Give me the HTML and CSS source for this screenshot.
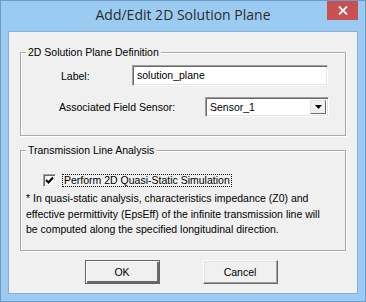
FILE: index.html
```html
<!DOCTYPE html>
<html>
<head>
	<title>Add/Edit 2D Solution Plane</title>
	<meta charset="UTF-8">
	<link rel="stylesheet" href="styles.css">
</head>
<body>

<div class="window">
	<div class="titlebar">
		<span class="title">Add/Edit 2D Solution Plane</span>
		<span class="close">
			<svg width="10" height="9" viewBox="0 0 10 9"><path d="M1 0.5 L9 8.5 M9 0.5 L1 8.5" stroke="white" stroke-width="1.8"/></svg>
		</span>
	</div>

	<div class="client">
		<div class="group definition">
			<div class="group-title">2D Solution Plane Definition</div>
			<div class="row label-row">
				<span class="label">Label:</span>
				<span class="textbox">solution_plane</span>
			</div>
			<div class="row sensor-row">
				<span class="label">Associated Field Sensor:</span>
				<span class="combo">
					<span class="combo-text">Sensor_1</span>
					<span class="combo-btn"><svg width="7" height="4" viewBox="0 0 7 4"><path d="M0 0 H7 L3.5 4 Z" fill="black"/></svg></span>
				</span>
			</div>
		</div>

		<div class="group analysis">
			<div class="group-title">Transmission Line Analysis</div>
			<div class="check-row">
				<span class="checkbox"><svg width="9" height="9" viewBox="0 0 9 9"><path d="M1 4 L3.5 6.5 L8 1.5" stroke="black" stroke-width="2" fill="none"/></svg></span>
				<span class="check-label">Perform 2D Quasi-Static Simulation</span>
			</div>
			<p class="note">* In quasi-static analysis, characteristics impedance (Z0) and<br>effective permittivity (EpsEff) of the infinite transmission line will<br>be computed along the specified longitudinal direction.</p>
		</div>

		<div class="buttons">
			<button class="default">OK</button>
			<button>Cancel</button>
		</div>
	</div>
</div>

</body>
</html>
```

FILE: styles.css
```css
html, body
{
	margin:0;
	padding:0;
}
body
{
	font-family:"Liberation Sans", Arial, sans-serif;
	font-size:10.5px;
	color:black;
}
.window
{
	box-sizing:border-box;
	width:366px;
	height:302px;
	background:#9ccbf2;
	border:1px solid #6b9dcc;
	display:flex;
	flex-direction:column;
}
.titlebar
{
	position:relative;
	height:30px;
	text-align:center;
}
.title
{
	font-family:"Open Sans", sans-serif;
	font-size:14px;
	line-height:28px;
	color:#2b2b2b;
}
.close
{
	position:absolute;
	top:0;
	right:7px;
	width:31px;
	height:19px;
	background:#c75050;
	display:flex;
	align-items:center;
	justify-content:center;
}
.client
{
	box-sizing:border-box;
	margin:0 7px 7px 7px;
	height:263px;
	background:#f0f0f0;
	border:1px solid #85afd6;
	padding:0 11px;
	display:flex;
	flex-direction:column;
}
.group
{
	border:1px solid #a9a9a9;
	box-shadow:1px 1px 0 white, inset 1px 1px 0 white;
}
.definition
{
	margin-top:20px;
	height:84px;
	box-sizing:border-box;
}
.analysis
{
	margin-top:14px;
	height:101px;
	box-sizing:border-box;
}
.group-title
{
	display:table;
	margin:-7px 0 0 5px;
	padding:0 2px;
	background:#f0f0f0;
	line-height:13px;
}
.row
{
	display:flex;
	align-items:center;
	padding-left:38px;
}
.label-row
{
	margin-top:6px;
}
.label-row .label
{
	width:71px;
	padding-left:2px;
}
.sensor-row
{
	margin-top:11px;
}
.sensor-row .label
{
	width:146px;
}
.textbox
{
	box-sizing:border-box;
	width:196px;
	height:21px;
	background:white;
	border:1px solid;
	border-color:#a0a0a0 white white #a0a0a0;
	box-shadow:inset 1px 1px 0 #696969, inset -1px -1px 0 #e3e3e3;
	padding:3px 0 0 4px;
}
.combo
{
	box-sizing:border-box;
	width:124px;
	height:20px;
	background:white;
	border:1px solid;
	border-color:#a0a0a0 white white #a0a0a0;
	box-shadow:inset 1px 1px 0 #696969, inset -1px -1px 0 #e3e3e3;
	display:flex;
	padding:2px;
}
.combo-text
{
	flex:1;
	padding:1px 0 0 2px;
}
.combo-btn
{
	box-sizing:border-box;
	width:16px;
	background:#f0f0f0;
	border:1px solid;
	border-color:#e3e3e3 #696969 #696969 #e3e3e3;
	display:flex;
	align-items:center;
	justify-content:center;
}
.check-row
{
	display:flex;
	align-items:center;
	margin:17px 0 0 22px;
}
.checkbox
{
	box-sizing:border-box;
	width:13px;
	height:13px;
	background:white;
	border:1px solid;
	border-color:#a0a0a0 white white #a0a0a0;
	box-shadow:inset 1px 1px 0 #696969, inset -1px -1px 0 #e3e3e3;
	display:flex;
	align-items:center;
	justify-content:center;
}
.check-label
{
	margin-left:6px;
	padding:0 1px;
	border:1px dotted black;
	line-height:11px;
}
.note
{
	margin:4px 4px 0 5px;
	line-height:15.5px;
	white-space:nowrap;
}
.buttons
{
	display:flex;
	justify-content:center;
	gap:43px;
	margin-top:9px;
	padding-right:4px;
}
button
{
	box-sizing:border-box;
	width:75px;
	height:24px;
	font-family:"Liberation Sans", Arial, sans-serif;
	font-size:10.5px;
	background:#f0f0f0;
	border:1px solid;
	border-color:white #696969 #696969 white;
	box-shadow:inset -1px -1px 0 #a0a0a0, inset 1px 1px 0 #e3e3e3;
	padding:0;
}
button.default
{
	border:1px solid #646464;
	box-shadow:inset 1px 1px 0 white, inset -2px -2px 0 #696969, inset -2px -2px 0 #a0a0a0;
}
```
